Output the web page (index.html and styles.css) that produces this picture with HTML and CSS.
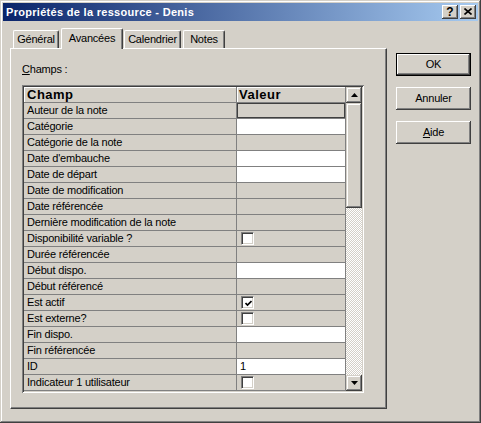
FILE: index.html
```html
<!DOCTYPE html>
<html lang="fr">
<head>
<meta charset="utf-8">
<title>Propriétés de la ressource - Denis</title>
<link rel="stylesheet" href="styles.css">
</head>
<body>
<div class="window">
  <div class="titlebar">
    <span class="title">Propriétés de la ressource - Denis</span>
    <div class="caps">
      <div class="capbtn help">?</div>
      <div class="capbtn close">
        <svg width="8" height="7" viewBox="0 0 8 7"><path d="M0.5 0.5 L7.5 6.5 M7.5 0.5 L0.5 6.5" stroke="#000" stroke-width="1.6" fill="none"/></svg>
      </div>
    </div>
  </div>
  <div class="body">
    <div class="main">
      <div class="tabs">
        <div class="tab t-gen">Général</div>
        <div class="tab active t-ava">Avancées</div>
        <div class="tab t-cal">Calendrier</div>
        <div class="tab t-not">Notes</div>
      </div>
      <div class="panel">
        <div class="label"><u>C</u>hamps :</div>
        <div class="grid">
          <div class="table">
            <div class="row head"><div class="name">Champ</div><div class="val">Valeur</div></div>
            <div class="row"><div class="name">Auteur de la note</div><div class="val focus"></div></div>
            <div class="row"><div class="name">Catégorie</div><div class="val white"></div></div>
            <div class="row"><div class="name">Catégorie de la note</div><div class="val"></div></div>
            <div class="row"><div class="name">Date d'embauche</div><div class="val white"></div></div>
            <div class="row"><div class="name">Date de départ</div><div class="val white"></div></div>
            <div class="row"><div class="name">Date de modification</div><div class="val"></div></div>
            <div class="row"><div class="name">Date référencée</div><div class="val"></div></div>
            <div class="row"><div class="name">Dernière modification de la note</div><div class="val"></div></div>
            <div class="row"><div class="name">Disponibilité variable ?</div><div class="val"><span class="check"></span></div></div>
            <div class="row"><div class="name">Durée référencée</div><div class="val"></div></div>
            <div class="row"><div class="name">Début dispo.</div><div class="val white"></div></div>
            <div class="row"><div class="name">Début référencé</div><div class="val"></div></div>
            <div class="row"><div class="name">Est actif</div><div class="val"><span class="check"><svg width="7" height="7" viewBox="0 0 7 7"><path d="M0.5 3 L2.5 5 L6.5 1" stroke="#000" stroke-width="1.7" fill="none"/></svg></span></div></div>
            <div class="row"><div class="name">Est externe?</div><div class="val"><span class="check"></span></div></div>
            <div class="row"><div class="name">Fin dispo.</div><div class="val white"></div></div>
            <div class="row"><div class="name">Fin référencée</div><div class="val"></div></div>
            <div class="row"><div class="name">ID</div><div class="val white">1</div></div>
            <div class="row"><div class="name">Indicateur 1 utilisateur</div><div class="val"><span class="check"></span></div></div>
          </div>
          <div class="scrollbar">
            <div class="sbtn"><svg width="7" height="4" viewBox="0 0 7 4"><path d="M3.5 0 L7 4 L0 4 Z" fill="#000"/></svg></div>
            <div class="track"><div class="thumb"></div></div>
            <div class="sbtn"><svg width="7" height="4" viewBox="0 0 7 4"><path d="M0 0 L7 0 L3.5 4 Z" fill="#000"/></svg></div>
          </div>
        </div>
      </div>
    </div>
    <div class="buttons">
      <div class="btn default"><span class="btn-in">OK</span></div>
      <div class="btn"><span class="btn-in">Annuler</span></div>
      <div class="btn"><span class="btn-in"><u>A</u>ide</span></div>
    </div>
  </div>
</div>
</body>
</html>
```

FILE: styles.css
```css
* { box-sizing: border-box; }
html, body {
  margin: 0;
  padding: 0;
  background: #d4d0c8;
}
body {
  font-family: "Liberation Sans", Arial, sans-serif;
  font-size: 11px;
  letter-spacing: -0.2px;
  color: #000;
}
.window {
  width: 481px;
  height: 423px;
  padding: 3px;
  background: #d4d0c8;
  box-shadow: inset -1px -1px #404040, inset 1px 1px #d4d0c8, inset -2px -2px #808080, inset 2px 2px #fff;
}
.titlebar {
  height: 18px;
  display: flex;
  align-items: center;
  justify-content: space-between;
  padding: 0 2px 0 3px;
  background: linear-gradient(to right, #0a246a, #a6caf0);
}
.title {
  color: #fff;
  font-weight: bold;
  letter-spacing: 0.3px;
  line-height: 13px;
}
.caps {
  display: flex;
  gap: 2px;
}
.capbtn {
  width: 16px;
  height: 14px;
  background: #d4d0c8;
  box-shadow: inset -1px -1px #404040, inset 1px 1px #fff, inset -2px -2px #808080, inset 2px 2px #d4d0c8;
  display: flex;
  align-items: center;
  justify-content: center;
  font-weight: bold;
  font-size: 12px;
  line-height: 12px;
  letter-spacing: 0;
  padding-bottom: 1px;
}
.capbtn svg { display: block; }
.body {
  display: flex;
  padding: 7px 0 0 7px;
}
.main {
  width: 377px;
}
.tabs {
  height: 20px;
  display: flex;
  align-items: flex-end;
  padding-left: 3px;
}
.tab {
  height: 18px;
  border-top: 1px solid #fff;
  border-left: 1px solid #fff;
  border-right: 1px solid #404040;
  box-shadow: inset -1px 0 #808080;
  border-radius: 2px 2px 0 0;
  display: flex;
  align-items: center;
  justify-content: center;
  background: #d4d0c8;
  line-height: 13px;
}
.t-gen { width: 46px; }
.t-ava { width: 62px; margin-left: 2px; }
.t-cal { width: 57px; margin-left: 1px; }
.t-not { width: 42px; margin-left: 2px; }
.tab.active {
  height: 21px;
  margin-bottom: -1px;
  position: relative;
  z-index: 1;
  padding-bottom: 2px;
}
.panel {
  height: 361px;
  border-top: 1px solid #fff;
  border-left: 1px solid #fff;
  border-right: 1px solid #404040;
  border-bottom: 1px solid #404040;
  box-shadow: inset -1px -1px #808080;
  padding: 14px 0 0 11px;
}
.label {
  line-height: 13px;
  height: 13px;
}
.grid {
  margin-top: 9px;
  width: 342px;
  height: 308px;
  padding: 2px;
  display: flex;
  background: #d4d0c8;
  box-shadow: inset 1px 1px #808080, inset -1px -1px #fff, inset 2px 2px #404040, inset -2px -2px #d4d0c8;
}
.table {
  width: 322px;
  height: 304px;
  overflow: hidden;
}
.row {
  display: grid;
  grid-template-columns: 213px 109px;
  height: 16px;
  border-bottom: 1px solid #808080;
}
.name, .val {
  border-right: 1px solid #808080;
  line-height: 15px;
  height: 15px;
  white-space: nowrap;
  overflow: hidden;
}
.name { padding-left: 3px; }
.val { padding-left: 3px; }
.val.white { background: #fff; }
.val.focus { box-shadow: inset 0 0 0 1px #404040; }
.row.head .name, .row.head .val {
  font-weight: bold;
  font-size: 13px;
  letter-spacing: 0.5px;
  box-shadow: inset 1px 1px #fff;
}
.row.head .val { padding-left: 2px; }
.check {
  display: flex;
  align-items: center;
  justify-content: center;
  width: 13px;
  height: 13px;
  margin: 1px 0 0 1px;
  background: #fff;
  border: 1px solid;
  border-color: #808080 #fff #fff #808080;
  box-shadow: inset 1px 1px #404040, inset -1px -1px #d4d0c8;
}
.check svg { display: block; margin: 1px 0 0 1px; }
.scrollbar {
  width: 16px;
  height: 304px;
  display: flex;
  flex-direction: column;
}
.sbtn {
  height: 16px;
  flex: none;
  background: #d4d0c8;
  box-shadow: inset -1px -1px #404040, inset 1px 1px #d4d0c8, inset -2px -2px #808080, inset 2px 2px #fff;
  display: flex;
  align-items: center;
  justify-content: center;
}
.sbtn svg { display: block; }
.track {
  flex: 1;
  background-color: #d4d0c8;
  background-image: repeating-conic-gradient(#fff 0 25%, #d4d0c8 0 50%);
  background-size: 2px 2px;
}
.thumb {
  height: 105px;
  background: #d4d0c8;
  box-shadow: inset -1px -1px #404040, inset 1px 1px #d4d0c8, inset -2px -2px #808080, inset 2px 2px #fff;
}
.buttons {
  display: flex;
  flex-direction: column;
  gap: 11px;
  margin-left: 9px;
  padding-top: 25px;
}
.btn {
  width: 75px;
  height: 23px;
  background: #d4d0c8;
  box-shadow: inset -1px -1px #404040, inset 1px 1px #fff, inset -2px -2px #808080, inset 2px 2px #d4d0c8;
  display: flex;
  align-items: center;
  justify-content: center;
  line-height: 13px;
}
.btn.default {
  border: 1px solid #000;
}
.btn.default .btn-in {
  display: flex;
  align-items: center;
  justify-content: center;
}
```
